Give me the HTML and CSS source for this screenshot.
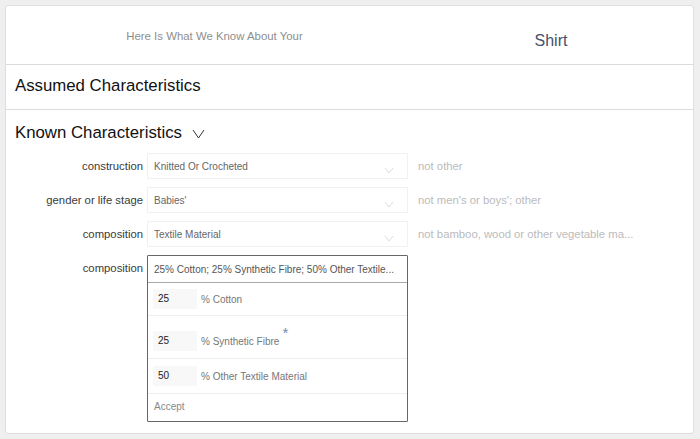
FILE: index.html
```html
<!DOCTYPE html>
<html>
<head>
<meta charset="utf-8">
<link rel="stylesheet" href="styles.css">
</head>
<body>
<div class="card">
  <div class="header">
    <div class="intro">Here Is What We Know About Your</div>
    <div class="product">Shirt</div>
  </div>
  <div class="section assumed">Assumed Characteristics</div>
  <div class="known">
    <div class="known-title">Known Characteristics
      <svg class="title-chev" width="13" height="10" viewBox="0 0 13 10"><polyline points="1,1 6.5,9 12,1" fill="none" stroke="#333" stroke-width="1"/></svg>
    </div>
    <div class="rows">
      <div class="row">
        <div class="label">construction</div>
        <div class="field"><span class="val">Knitted Or Crocheted</span><svg class="chev" width="10" height="7" viewBox="0 0 10 7"><polyline points="1,1 5,6 9,1" fill="none" stroke="#ddd" stroke-width="1"/></svg></div>
        <div class="hint">not other</div>
      </div>
      <div class="row">
        <div class="label">gender or life stage</div>
        <div class="field"><span class="val">Babies'</span><svg class="chev" width="10" height="7" viewBox="0 0 10 7"><polyline points="1,1 5,6 9,1" fill="none" stroke="#ddd" stroke-width="1"/></svg></div>
        <div class="hint">not men's or boys'; other</div>
      </div>
      <div class="row">
        <div class="label">composition</div>
        <div class="field"><span class="val">Textile Material</span><svg class="chev" width="10" height="7" viewBox="0 0 10 7"><polyline points="1,1 5,6 9,1" fill="none" stroke="#ddd" stroke-width="1"/></svg></div>
        <div class="hint">not bamboo, wood or other vegetable ma...</div>
      </div>
      <div class="row open-row">
        <div class="label">composition</div>
        <div class="dropdown">
          <div class="dd-head"><span class="dd-val">25% Cotton; 25% Synthetic Fibre; 50% Other Textile...</span><svg class="chev dd-chev" width="10" height="7" viewBox="0 0 10 7"><polyline points="1,1 5,6 9,1" fill="none" stroke="#e4e4e4" stroke-width="1"/></svg></div>
          <div class="opt opt1"><span class="num">25</span><span class="opt-label">% Cotton</span></div>
          <div class="opt opt2"><span class="num">25</span><span class="opt-label">% Synthetic Fibre<span class="star">*</span></span></div>
          <div class="opt opt3"><span class="num">50</span><span class="opt-label">% Other Textile Material</span></div>
          <div class="accept">Accept</div>
        </div>
      </div>
    </div>
  </div>
</div>
</body>
</html>
```

FILE: styles.css
```css
html, body {
  margin: 0;
  padding: 0;
}
body {
  background: #efefef;
  font-family: "Liberation Sans", Arial, sans-serif;
  padding: 5px 6px 5px 5px;
  height: 439px;
  box-sizing: border-box;
}
.card {
  background: #fff;
  border: 1px solid #dedede;
  border-radius: 3px;
  height: 429px;
  box-sizing: border-box;
}
.header {
  display: grid;
  grid-template-columns: 417px 256px;
  height: 58px;
  border-bottom: 1px solid #dcdcdc;
}
.intro {
  text-align: center;
  font-size: 11.4px;
  color: #8e8e8e;
  padding-top: 24px;
}
.product {
  text-align: center;
  font-size: 16px;
  color: #44526b;
  padding-top: 26px;
}
.section {
  padding-left: 9px;
  font-size: 16.8px;
  color: #111;
}
.assumed {
  height: 44px;
  line-height: 42px;
  border-bottom: 1px solid #dcdcdc;
}
.known-title {
  padding-left: 9px;
  font-size: 16.8px;
  color: #111;
  height: 22px;
  line-height: 22px;
  margin-top: 12px;
  display: flex;
  align-items: center;
}
.title-chev {
  margin-left: 10px;
  margin-top: 1px;
}
.rows {
  margin-top: 9px;
  display: flex;
  flex-direction: column;
  gap: 8px;
}
.row {
  display: flex;
  align-items: center;
  height: 26px;
}
.open-row {
  align-items: flex-start;
  height: auto;
}
.label {
  width: 137px;
  text-align: right;
  font-size: 11.3px;
  color: #3a3a3a;
  margin-right: 4px;
}
.open-row .label {
  line-height: 26px;
}
.field {
  width: 261px;
  height: 26px;
  box-sizing: border-box;
  border: 1px solid #f1f1f1;
  display: flex;
  align-items: center;
  padding-left: 6px;
}
.val {
  font-size: 10px;
  color: #666;
  flex: 1;
}
.chev {
  margin-right: 13px;
  margin-top: 9px;
}
.hint {
  margin-left: 10px;
  font-size: 11.3px;
  color: #bbb;
}
.dropdown {
  width: 261px;
  box-sizing: border-box;
  border: 1px solid #666;
  border-radius: 1px;
}
.dd-head {
  height: 27px;
  border-bottom: 1px solid #aaa;
  display: flex;
  align-items: center;
  padding-left: 6px;
  box-sizing: border-box;
}
.dd-val {
  font-size: 10px;
  color: #555;
  white-space: nowrap;
  flex: 1;
}
.dd-chev {
  margin-right: 10px;
}
.opt {
  display: flex;
  align-items: center;
  padding-left: 5px;
  border-bottom: 1px solid #eeeeee;
  box-sizing: border-box;
}
.opt1 { height: 33px; }
.opt2 { height: 43px; padding-top: 8px; }
.opt3 { height: 35px; }
.num {
  width: 44px;
  height: 20px;
  background: #f8f8f8;
  font-size: 10px;
  color: #222;
  line-height: 20px;
  padding-left: 5px;
  box-sizing: border-box;
  margin-right: 4px;
}
.opt-label {
  font-size: 10px;
  color: #777;
  position: relative;
}
.star {
  position: absolute;
  right: -9px;
  top: -12px;
  color: #6f8db3;
  font-size: 15px;
}
.accept {
  height: 27px;
  line-height: 25px;
  padding-left: 6px;
  font-size: 10px;
  color: #888;
}
```
